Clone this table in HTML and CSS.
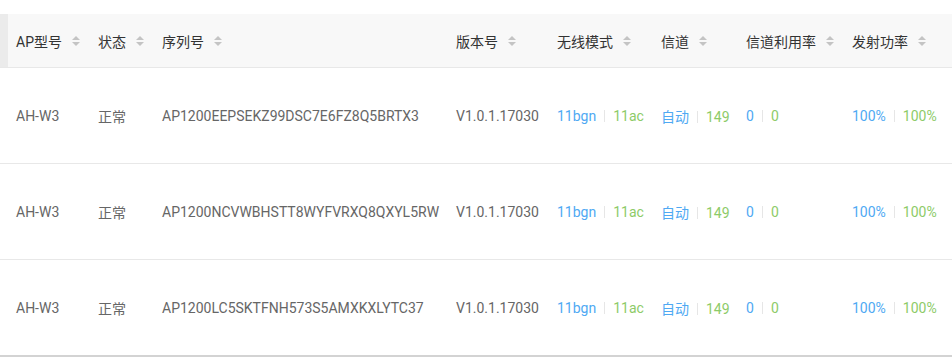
FILE: index.html
```html
<!DOCTYPE html>
<html lang="zh-CN">
<head>
<meta charset="utf-8">
<title>AP列表</title>
<link rel="stylesheet" href="styles.css">
</head>
<body>
<div class="wrap">
<table class="ap-table">
  <colgroup>
    <col class="c0"><col class="c1"><col class="c2"><col class="c3"><col class="c4"><col class="c5"><col class="c6"><col class="c7"><col class="c8">
  </colgroup>
  <thead>
    <tr>
      <th class="strip"></th>
      <th><span class="th">AP型号<i class="sort"></i></span></th>
      <th><span class="th">状态<i class="sort"></i></span></th>
      <th><span class="th">序列号<i class="sort"></i></span></th>
      <th><span class="th">版本号<i class="sort"></i></span></th>
      <th><span class="th">无线模式<i class="sort"></i></span></th>
      <th><span class="th">信道<i class="sort"></i></span></th>
      <th><span class="th">信道利用率<i class="sort"></i></span></th>
      <th><span class="th">发射功率<i class="sort"></i></span></th>
    </tr>
  </thead>
  <tbody>
    <tr>
      <td class="strip"></td>
      <td>AH-W3</td>
      <td>正常</td>
      <td>AP1200EEPSEKZ99DSC7E6FZ8Q5BRTX3</td>
      <td>V1.0.1.17030</td>
      <td><span class="b">11bgn</span><i class="sep"></i><span class="g">11ac</span></td>
      <td><span class="b">自动</span><i class="sep"></i><span class="g">149</span></td>
      <td><span class="b">0</span><i class="sep"></i><span class="g">0</span></td>
      <td><span class="b">100%</span><i class="sep"></i><span class="g">100%</span></td>
    </tr>
    <tr>
      <td class="strip"></td>
      <td>AH-W3</td>
      <td>正常</td>
      <td>AP1200NCVWBHSTT8WYFVRXQ8QXYL5RW</td>
      <td>V1.0.1.17030</td>
      <td><span class="b">11bgn</span><i class="sep"></i><span class="g">11ac</span></td>
      <td><span class="b">自动</span><i class="sep"></i><span class="g">149</span></td>
      <td><span class="b">0</span><i class="sep"></i><span class="g">0</span></td>
      <td><span class="b">100%</span><i class="sep"></i><span class="g">100%</span></td>
    </tr>
    <tr>
      <td class="strip"></td>
      <td>AH-W3</td>
      <td>正常</td>
      <td>AP1200LC5SKTFNH573S5AMXKXLYTC37</td>
      <td>V1.0.1.17030</td>
      <td><span class="b">11bgn</span><i class="sep"></i><span class="g">11ac</span></td>
      <td><span class="b">自动</span><i class="sep"></i><span class="g">149</span></td>
      <td><span class="b">0</span><i class="sep"></i><span class="g">0</span></td>
      <td><span class="b">100%</span><i class="sep"></i><span class="g">100%</span></td>
    </tr>
  </tbody>
</table>
</div>
</body>
</html>
```
FILE: styles.css
```css
html, body {
  margin: 0;
  padding: 0;
  background: #fff;
}
body {
  font-family: Roboto, "Noto Sans CJK SC", sans-serif;
  font-size: 14px;
  color: #666;
  overflow: hidden;
}
.wrap {
  padding-top: 14px;
  width: 952px;
}
.ap-table {
  width: 952px;
  border-collapse: collapse;
  table-layout: fixed;
}
.c0 { width: 8px; }
.c1 { width: 82px; }
.c2 { width: 64px; }
.c3 { width: 294px; }
.c4 { width: 101px; }
.c5 { width: 104px; }
.c6 { width: 85px; }
.c7 { width: 106px; }
.c8 { width: 108px; }

.ap-table th {
  height: 53px;
  padding: 0 0 0 8px;
  background: #f8f8f8;
  border-bottom: 1px solid #e8e8e8;
  text-align: left;
  font-weight: normal;
  color: #333;
  white-space: nowrap;
}
.ap-table th.strip {
  padding: 0;
  background: #ebebeb;
}
.ap-table td {
  height: 95px;
  padding: 0 0 0 8px;
  border-bottom: 1px solid #e8e8e8;
  white-space: nowrap;
  color: #666;
}
.ap-table td.strip {
  padding: 0;
}
.ap-table tbody tr:last-child td {
  border-bottom: 2px solid #d3d3d3;
}
.th {
  display: inline-flex;
  align-items: center;
}
.sort {
  display: inline-flex;
  flex-direction: column;
  gap: 2px;
  margin-left: 10px;
}
.sort::before,
.sort::after {
  content: "";
  display: block;
  width: 0;
  height: 0;
  border-left: 4px solid transparent;
  border-right: 4px solid transparent;
}
.sort::before {
  border-bottom: 4px solid #c4c4c4;
}
.sort::after {
  border-top: 4px solid #c4c4c4;
}
.sep {
  display: inline-block;
  width: 1px;
  height: 12px;
  background: #e6e6e6;
  margin: 0 8px;
  vertical-align: -1px;
}
.b { color: #4fa9f3; }
.g { color: #8dcb68; }
```
